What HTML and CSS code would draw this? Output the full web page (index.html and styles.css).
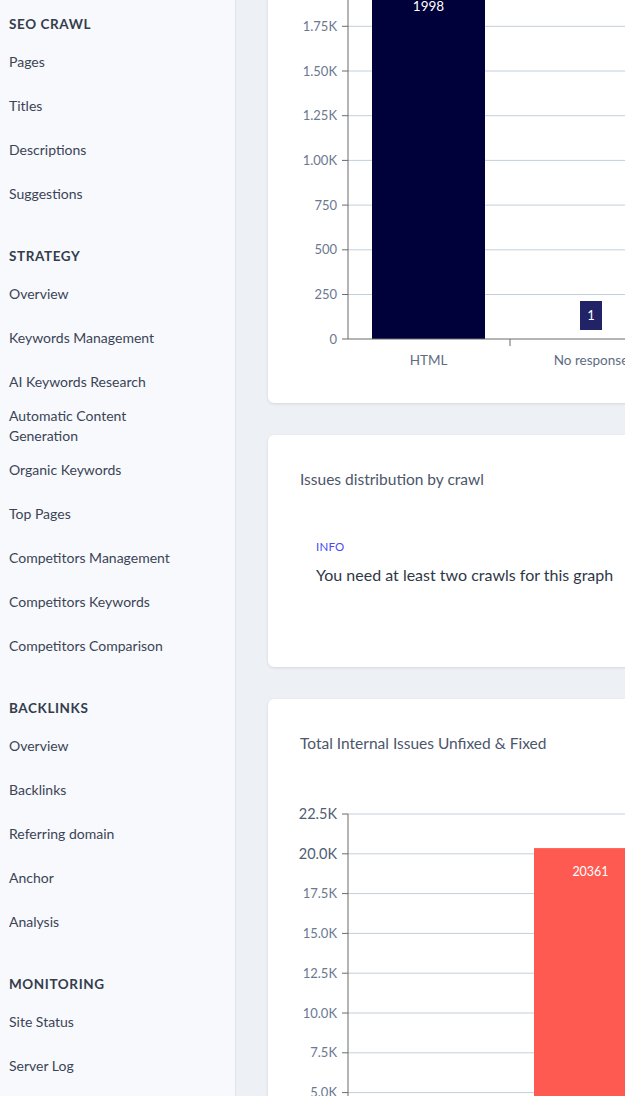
FILE: index.html
```html
<!DOCTYPE html>
<html lang="en">
<head>
<meta charset="utf-8">
<title>SEO Dashboard</title>
<link rel="stylesheet" href="styles.css">
</head>
<body>
<div class="app">
  <aside class="sidebar">
    <section class="nav-section first">
      <h3 class="nav-heading">SEO CRAWL</h3>
      <a class="nav-item">Pages</a>
      <a class="nav-item">Titles</a>
      <a class="nav-item">Descriptions</a>
      <a class="nav-item">Suggestions</a>
    </section>
    <section class="nav-section">
      <h3 class="nav-heading">STRATEGY</h3>
      <a class="nav-item">Overview</a>
      <a class="nav-item">Keywords Management</a>
      <a class="nav-item">AI Keywords Research</a>
      <a class="nav-item">Automatic Content Generation</a>
      <a class="nav-item">Organic Keywords</a>
      <a class="nav-item">Top Pages</a>
      <a class="nav-item">Competitors Management</a>
      <a class="nav-item">Competitors Keywords</a>
      <a class="nav-item">Competitors Comparison</a>
    </section>
    <section class="nav-section">
      <h3 class="nav-heading">BACKLINKS</h3>
      <a class="nav-item">Overview</a>
      <a class="nav-item">Backlinks</a>
      <a class="nav-item">Referring domain</a>
      <a class="nav-item">Anchor</a>
      <a class="nav-item">Analysis</a>
    </section>
    <section class="nav-section">
      <h3 class="nav-heading">MONITORING</h3>
      <a class="nav-item">Site Status</a>
      <a class="nav-item">Server Log</a>
      <a class="nav-item">Alerts</a>
    </section>
  </aside>

  <main class="main">
    <div class="content">
      <div class="card card-chart-top">
        <svg class="chart chart-types" width="400" height="440" viewBox="0 0 400 440">
          <g class="grid">
            <line x1="80" x2="400" y1="41.6" y2="41.6"/>
            <line x1="80" x2="400" y1="86.3" y2="86.3"/>
            <line x1="80" x2="400" y1="131" y2="131"/>
            <line x1="80" x2="400" y1="175.7" y2="175.7"/>
            <line x1="80" x2="400" y1="220.4" y2="220.4"/>
            <line x1="80" x2="400" y1="265.1" y2="265.1"/>
            <line x1="80" x2="400" y1="309.8" y2="309.8"/>
            <line x1="80" x2="400" y1="354.5" y2="354.5"/>
          </g>
          <rect class="bar-navy" x="104" y="41.8" width="113" height="357.2"/>
          <text class="bar-label" x="160.5" y="71" text-anchor="middle">1998</text>
          <rect class="bar-tag" x="312" y="361" width="22" height="29"/>
          <text class="tag-label" x="323" y="380" text-anchor="middle">1</text>
          <g class="axis">
            <line x1="80" x2="80" y1="0" y2="399"/>
            <line x1="80" x2="400" y1="399" y2="399"/>
            <line x1="74" x2="80" y1="41.6" y2="41.6"/>
            <line x1="74" x2="80" y1="86.3" y2="86.3"/>
            <line x1="74" x2="80" y1="131" y2="131"/>
            <line x1="74" x2="80" y1="175.7" y2="175.7"/>
            <line x1="74" x2="80" y1="220.4" y2="220.4"/>
            <line x1="74" x2="80" y1="265.1" y2="265.1"/>
            <line x1="74" x2="80" y1="309.8" y2="309.8"/>
            <line x1="74" x2="80" y1="354.5" y2="354.5"/>
            <line x1="74" x2="80" y1="399" y2="399"/>
            <line x1="242" x2="242" y1="399" y2="406"/>
          </g>
          <g class="tick-labels" text-anchor="end">
            <text x="69" y="46">2.00K</text>
            <text x="69" y="90.8">1.75K</text>
            <text x="69" y="135.5">1.50K</text>
            <text x="69" y="180.2">1.25K</text>
            <text x="69" y="224.9">1.00K</text>
            <text x="69" y="269.6">750</text>
            <text x="69" y="314.3">500</text>
            <text x="69" y="359">250</text>
            <text x="69" y="403.6">0</text>
          </g>
          <g class="cat-labels" text-anchor="middle">
            <text x="160.5" y="425">HTML</text>
            <text x="323" y="425">No response</text>
          </g>
        </svg>
      </div>

      <div class="card card-info">
        <h2 class="card-title">Issues distribution by crawl</h2>
        <div class="info-block">
          <div class="info-label">INFO</div>
          <p class="info-text">You need at least two crawls for this graph</p>
        </div>
      </div>

      <div class="card card-issues">
        <h2 class="card-title">Total Internal Issues Unfixed &amp; Fixed</h2>
        <svg class="chart chart-issues" width="400" height="340" viewBox="0 0 400 340">
          <g class="grid">
            <line x1="80" x2="400" y1="24" y2="24"/>
            <line x1="80" x2="400" y1="63.8" y2="63.8"/>
            <line x1="80" x2="400" y1="103.6" y2="103.6"/>
            <line x1="80" x2="400" y1="143.4" y2="143.4"/>
            <line x1="80" x2="400" y1="183.2" y2="183.2"/>
            <line x1="80" x2="400" y1="223" y2="223"/>
            <line x1="80" x2="400" y1="262.8" y2="262.8"/>
            <line x1="80" x2="400" y1="302.6" y2="302.6"/>
          </g>
          <rect class="bar-red" x="266" y="58.1" width="113" height="290"/>
          <text class="bar-label small" x="322.5" y="85.5" text-anchor="middle">20361</text>
          <g class="axis">
            <line x1="80" x2="80" y1="24" y2="340"/>
            <line x1="74" x2="80" y1="24" y2="24"/>
            <line x1="74" x2="80" y1="63.8" y2="63.8"/>
            <line x1="74" x2="80" y1="103.6" y2="103.6"/>
            <line x1="74" x2="80" y1="143.4" y2="143.4"/>
            <line x1="74" x2="80" y1="183.2" y2="183.2"/>
            <line x1="74" x2="80" y1="223" y2="223"/>
            <line x1="74" x2="80" y1="262.8" y2="262.8"/>
            <line x1="74" x2="80" y1="302.6" y2="302.6"/>
          </g>
          <g class="tick-labels" text-anchor="end">
            <text class="big" x="69" y="29">22.5K</text>
            <text class="big" x="69" y="68.8">20.0K</text>
            <text x="69" y="108.2">17.5K</text>
            <text x="69" y="148">15.0K</text>
            <text x="69" y="187.8">12.5K</text>
            <text x="69" y="227.6">10.0K</text>
            <text x="69" y="267.4">7.5K</text>
            <text x="69" y="307.2">5.0K</text>
          </g>
        </svg>
      </div>
    </div>
  </main>
</div>
</body>
</html>
```

FILE: styles.css
```css
* { box-sizing: border-box; }

html, body {
  margin: 0;
  padding: 0;
  height: 100%;
  overflow: hidden;
}

body {
  font-family: Lato, "Open Sans", "Liberation Sans", sans-serif;
  background: #edf0f5;
  color: #3b4456;
}

.app {
  display: flex;
  height: 1096px;
  overflow: hidden;
}

.sidebar {
  flex: 0 0 236px;
  width: 236px;
  background: #f7f9fc;
  border-right: 1px solid #e1e5ec;
  overflow: hidden;
}

.nav-section {
  display: flex;
  flex-direction: column;
}

.nav-heading {
  margin: 30px 0 6px;
  padding: 0 9px;
  font-size: 13.5px;
  line-height: 20px;
  font-weight: 700;
  letter-spacing: 0.6px;
  color: #343c4d;
}

.nav-section.first .nav-heading {
  margin-top: 14px;
}

.nav-item {
  display: flex;
  align-items: center;
  height: 44px;
  padding: 0 60px 0 9px;
  font-size: 14px;
  line-height: 20px;
  color: #3b4456;
  text-decoration: none;
}

.main {
  flex: 1 1 auto;
  overflow: hidden;
}

.content {
  width: 720px;
  margin-top: -60px;
  padding-left: 32px;
  display: flex;
  flex-direction: column;
  gap: 32px;
}

.card {
  background: #ffffff;
  border-radius: 6px;
  box-shadow: 0 1px 3px rgba(30, 45, 70, 0.12);
}

.card-chart-top {
  padding: 0 0 23px 0;
}

.chart {
  display: block;
  font-family: Lato, "Open Sans", "Liberation Sans", sans-serif;
  overflow: visible;
}

.grid line {
  stroke: #c3cfdb;
  stroke-width: 1;
}

.axis line {
  stroke: #6b6b6b;
  stroke-width: 1;
}

.tick-labels text {
  font-size: 13px;
  fill: #6a7890;
}

.tick-labels text.big {
  font-size: 14.5px;
  fill: #4f5d73;
}

.cat-labels text {
  font-size: 13.5px;
  fill: #5e6c82;
}

.bar-navy { fill: #00003a; }
.bar-red { fill: #ff5a52; }
.bar-tag { fill: #222266; }

.bar-label {
  font-size: 13.5px;
  fill: #ffffff;
}

.bar-label.small {
  font-size: 12.5px;
}

.tag-label {
  font-size: 13px;
  fill: #ffffff;
}

.card-title {
  margin: 0;
  font-size: 15.5px;
  line-height: 20px;
  font-weight: 400;
  color: #4c566a;
}

.card-info {
  padding: 34px 32px 82px;
}

.info-block {
  margin-top: 50px;
  padding-left: 16px;
}

.info-label {
  font-size: 11.5px;
  line-height: 16px;
  color: #4a4af4;
  letter-spacing: 0.2px;
}

.info-text {
  margin: 10px 0 0;
  font-size: 16px;
  line-height: 20px;
  color: #2f3748;
}

.card-issues {
  padding: 34px 0 0 32px;
}

.card-issues .chart {
  margin-left: -32px;
  margin-top: 37px;
}
```
